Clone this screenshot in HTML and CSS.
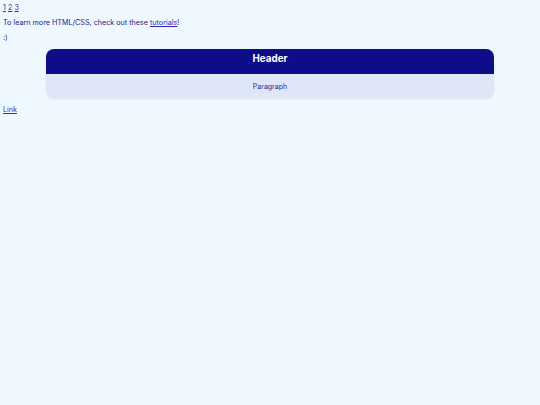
FILE: index.html
```html
<!DOCTYPE html>
<html>
<head>
<meta charset="utf-8">
<link rel="stylesheet" href="styles.css">
</head>
<body>
<nav class="nums"><a class="visited" href="#">1</a> <a class="visited" href="#">2</a> <a class="visited" href="#">3</a></nav>
<p class="intro">To learn more HTML/CSS, check out these <a href="#">tutorials</a>!</p>
<p class="smile">:)</p>
<div class="card">
  <div class="card-head">Header</div>
  <div class="card-body">Paragraph</div>
</div>
<a class="link visited" href="#">Link</a>
</body>
</html>
```
FILE: styles.css
```css
html, body {
  margin: 0;
  background: #f0f8ff;
}
body {
  padding: 3px;
  font-family: Inter, sans-serif;
  font-size: 7.2px;
  color: #22228a;
}
a { color: #2a2ab0; }
a.visited { color: #4a2c98; }
.nums { line-height: 9px; }
.intro { margin: 5px 0 0; line-height: 12px; }
.smile { margin: 3px 0 0; line-height: 12px; }
.card {
  width: 448px;
  margin: 5px auto 0;
  border-radius: 8px;
  overflow: hidden;
  background: #dfe6f8;
  box-shadow: 0 1px 2px rgba(0,0,0,0.08);
}
.card-head {
  background: #0d0d8a;
  color: #fff;
  font-weight: 700;
  font-size: 9.8px;
  text-align: center;
  height: 25px;
  line-height: 20px;
}
.card-body {
  font-size: 7px;
  text-align: center;
  height: 24px;
  line-height: 25px;
  color: #2a2a80;
}
.link { display: inline-block; margin-top: 7px; line-height: 9px; }
```
